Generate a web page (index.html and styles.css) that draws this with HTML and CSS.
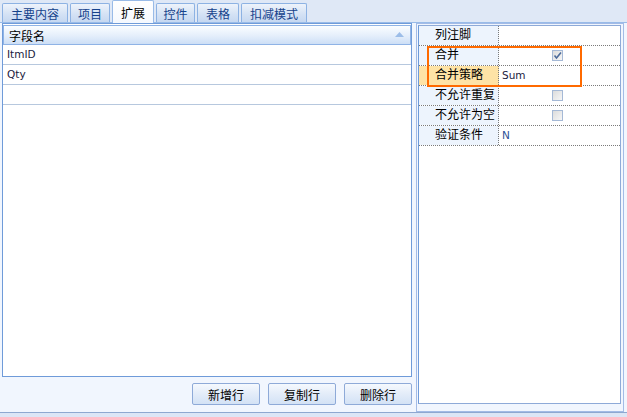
FILE: index.html
```html
<!DOCTYPE html>
<html>
<head>
<meta charset="utf-8">
<link rel="stylesheet" href="styles.css">
</head>
<body>
<div class="page">
  <div class="tabs">
    <div class="tab w66">主要内容</div>
    <div class="tab w40">项目</div>
    <div class="tab active w42">扩展</div>
    <div class="tab w39">控件</div>
    <div class="tab w42">表格</div>
    <div class="tab w66">扣减模式</div>
  </div>
  <div class="main">
    <div class="left">
      <div class="grid">
        <div class="grid-head">
          <span>字段名</span>
          <svg class="sort" width="9" height="5" viewBox="0 0 9 5"><path d="M0 5 L4.5 0 L9 5 Z" fill="#9cbde8"/></svg>
        </div>
        <div class="grid-row">ItmID</div>
        <div class="grid-row">Qty</div>
        <div class="grid-row"></div>
      </div>
      <div class="buttons">
        <button class="btn">新增行</button>
        <button class="btn">复制行</button>
        <button class="btn">删除行</button>
      </div>
    </div>
    <div class="right">
      <div class="right-inner">
        <div class="prop">
          <div class="prow"><div class="pname">列注脚</div><div class="pval"></div></div>
          <div class="prow"><div class="pname">合并</div><div class="pval center"><span class="cb"><svg width="11" height="11" viewBox="0 0 11 11"><path d="M2.5 5.5 L4.5 8 L9 2.5" fill="none" stroke="#4d6b9a" stroke-width="1.6"/></svg></span></div></div>
          <div class="prow"><div class="pname sel">合并策略</div><div class="pval txt">Sum</div></div>
          <div class="prow"><div class="pname">不允许重复</div><div class="pval center"><span class="cb"></span></div></div>
          <div class="prow"><div class="pname">不允许为空</div><div class="pval center"><span class="cb"></span></div></div>
          <div class="prow"><div class="pname">验证条件</div><div class="pval txt blue">N</div></div>
          <div class="hl"></div>
        </div>
      </div>
    </div>
  </div>
  <div class="foot"></div>
</div>
</body>
</html>
```
FILE: styles.css
```css
* { box-sizing: border-box; }
html, body { margin: 0; padding: 0; }
body {
  width: 627px; height: 417px; overflow: hidden;
  font-family: "Liberation Sans", "Noto Sans CJK SC", sans-serif;
  font-size: 12px; color: #000;
  background: #dce6f6;
}
.page { width: 627px; height: 417px; display: flex; flex-direction: column; }

.tabs {
  height: 23px; flex: none;
  background: #dfe8f6;
  border-bottom: 1px solid #99bbe8;
  display: flex; align-items: flex-end; gap: 2px;
  padding-left: 2px;
}
.tab {
  height: 19px; margin-bottom: 0;
  border: 1px solid #8db2e3; border-bottom: none;
  border-radius: 2px 2px 0 0;
  background: linear-gradient(#eef3fb, #d3e1f4 60%, #c6d8f1);
  color: #15428b;
  font-size: 12px;
  display: flex; align-items: center; justify-content: center;
  padding-top: 1px;
}
.tab.active {
  height: 23px; margin-bottom: -1px;
  background: linear-gradient(#ffffff, #f4f8fe);
  color: #000;
  border-color: #99bbe8;
}
.w66 { width: 66px; } .w40 { width: 40px; } .w42 { width: 42px; } .w39 { width: 39px; }

.main {
  height: 389px; flex: none;
  background: #f1f6fe;
  display: flex; gap: 4px;
  padding-left: 2px;
}
.left { width: 410px; display: flex; flex-direction: column; }
.grid {
  height: 354px; background: #fff;
  border: 1px solid #6f9bd9;
  padding: 1px 0 0 0;
}
.grid-head {
  height: 20px; margin: 0 0 0 0;
  border: 1px solid #8fb3e6;
  background: linear-gradient(#fbfdff, #e4eefb 55%, #cddff6);
  display: flex; align-items: center; justify-content: space-between;
  padding: 0 6px 0 5px;
  font-size: 12px;
}
.sort { margin-top: -1px; }
.grid-row {
  height: 20px; border-bottom: 1px solid #b7c8de;
  padding-left: 4px; line-height: 19px;
  font-family: "DejaVu Sans", sans-serif; font-size: 10.5px; color: #1a1a40;
}
.buttons {
  display: flex; justify-content: flex-end; gap: 8px;
  margin-top: 6px; padding-right: 0;
}
.btn {
  width: 68px; height: 22px;
  border: 1px solid #8eaad8; border-radius: 2px;
  background: linear-gradient(#f5f9fe, #e3ecf9 50%, #d3e2f5);
  font-family: "Liberation Sans", "Noto Sans CJK SC", sans-serif;
  font-size: 12px; color: #000; padding: 0;
}

.right {
  width: 208px; height: 389px;
  border: 1px solid #a3bbe6;
  padding: 1px 2px 7px 1px;
  background: #f1f6fe;
}
.right-inner {
  height: 100%; background: #fff;
  border: 1px solid #8eaad8;
  border-left-color: #6f9bd9;
}
.prop { position: relative; }
.prow { display: flex; height: 20px; border-bottom: 1px dotted #7a7a7a; }
.pname {
  width: 80px; background: #edf4fd;
  border-right: 1px dotted #7a7a7a;
  padding-left: 16px; line-height: 19px; font-size: 12px;
}
.pname.sel { background: #fee3a6; }
.pval { flex: 1; line-height: 19px; }
.pval.txt { padding-left: 3px; font-family: "DejaVu Sans", sans-serif; font-size: 10.5px; color: #1a1a40; }
.pval.blue { color: #2c4f95; }
.pval.center { display: flex; align-items: center; padding-left: 53px; }
.cb {
  width: 11px; height: 11px; display: block;
  border: 1px solid #a5b9d6;
  background: linear-gradient(135deg, #dcdcdc, #f6f6f6);
  position: relative;
}
.cb svg { position: absolute; left: -1px; top: -1px; }
.hl {
  position: absolute; left: 8px; top: 20px;
  width: 155px; height: 41px;
  border: 2px solid #ff6a00;
}
.foot {
  height: 5px; border-top: 1px solid #8ea8d0;
  background: #dce6f6;
}
```
